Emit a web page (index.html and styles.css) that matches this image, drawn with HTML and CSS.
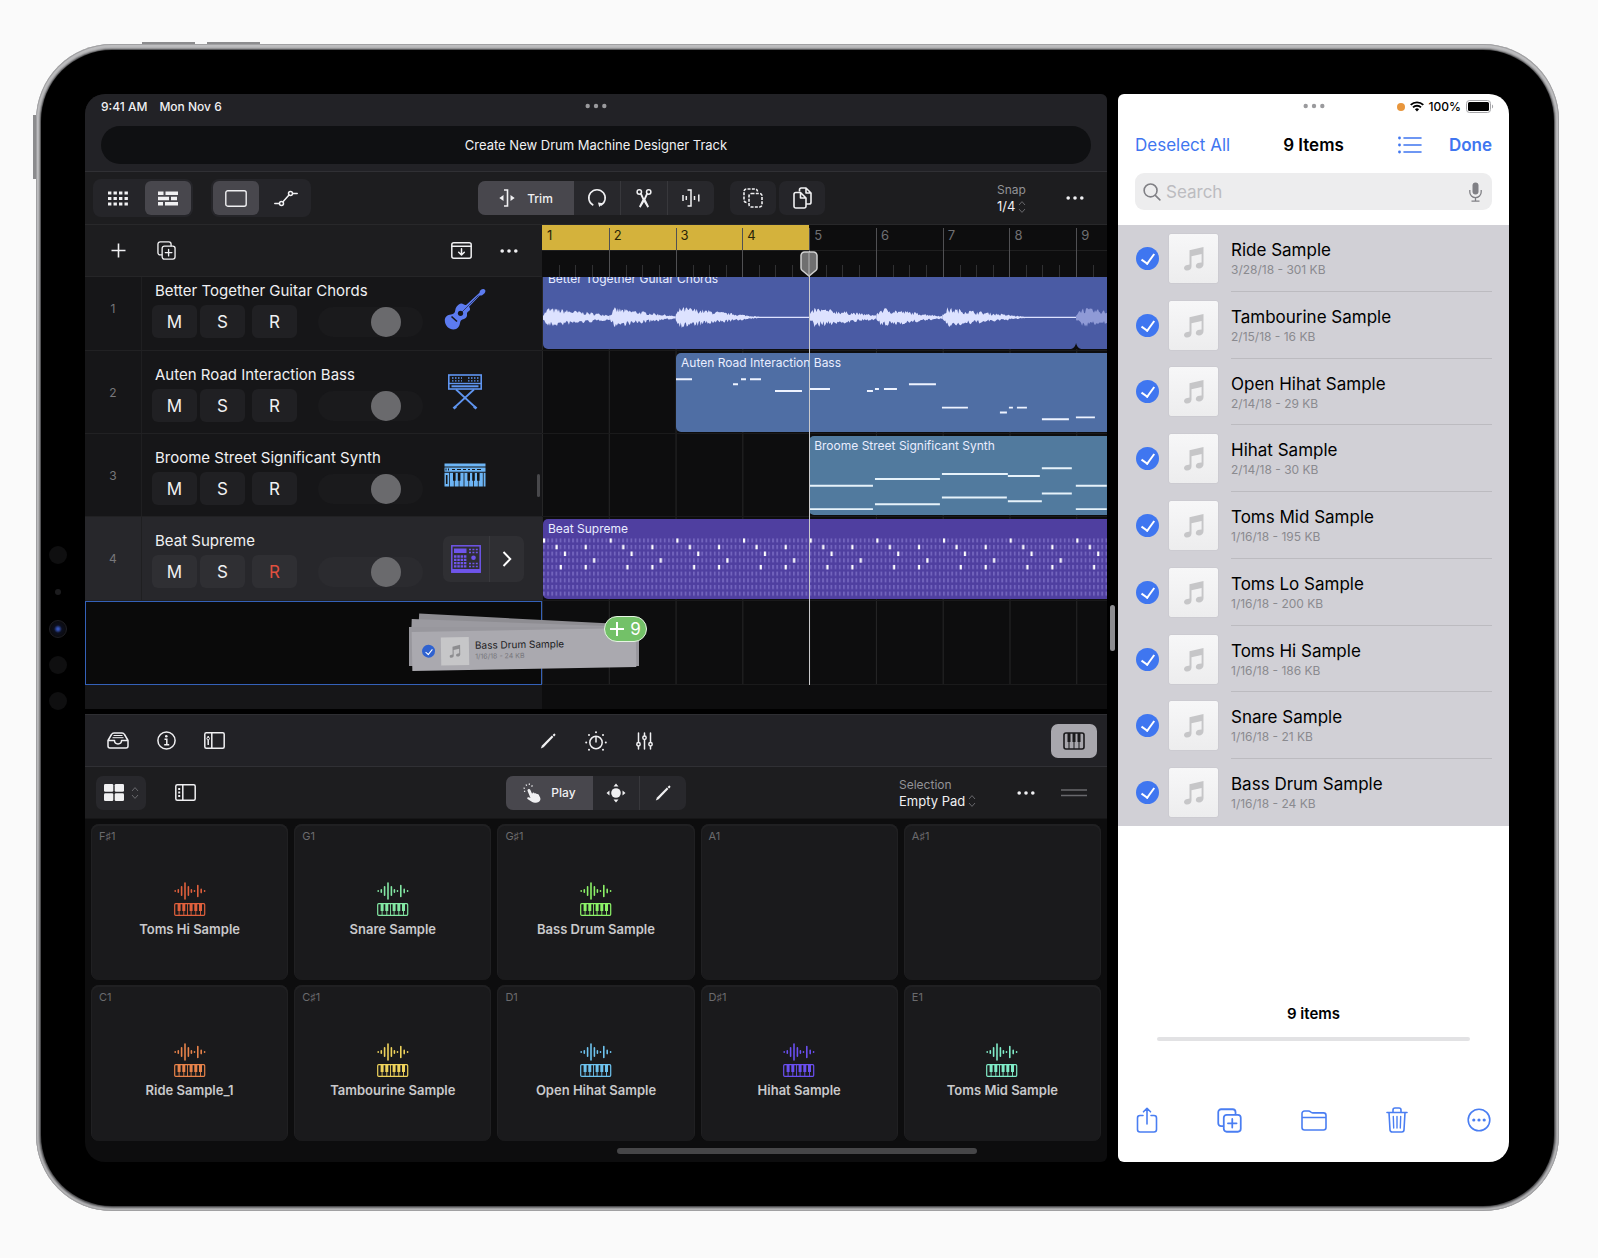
FILE: index.html
```html
<!DOCTYPE html>
<html lang="en">
<head>
<meta charset="utf-8">
<meta name="viewport" content="width=device-width, initial-scale=1">
<title>Drum Machine Designer</title>
<link rel="stylesheet" href="styles.css">
</head>
<body>
<svg class="symbols" aria-hidden="true">
  <symbol id="i-dots" viewBox="0 0 18 4"><circle cx="2.2" cy="2" r="1.8"/><circle cx="9" cy="2" r="1.8"/><circle cx="15.8" cy="2" r="1.8"/></symbol>
  <symbol id="i-updown" viewBox="0 0 8 14"><path d="M1 5l3-3.4L7 5M1 9l3 3.4L7 9" fill="none" stroke="currentColor"/></symbol>
  <symbol id="i-duplicate" viewBox="0 0 24 24"><g fill="none" stroke="currentColor" stroke-width="1.7" stroke-linecap="round" stroke-linejoin="round"><path d="M6 17.5H4A2.8 2.8 0 0 1 1.2 14.700V4A2.800 2.800 0 0 1 4 1.200H15A2.800 2.800 0 0 1 17.800 4V6"/><rect x="6.500" y="6.500" width="16.300" height="16.300" rx="2.800"/><path d="M14.650 10.500v8.300M10.500 14.650h8.300"/></g></symbol>
  <symbol id="i-pencil" viewBox="0 0 16 16"><path d="M.8 15.400l1.200-2.900L11.900 2.600l1.500 1.500L3.600 14.200z"/><path d="M12.600 1.900l1-1a1.060 1.060 0 0 1 1.500 1.500l-1 1z"/></symbol>
  <symbol id="i-note" viewBox="0 0 22 25"><path d="M6.500 4.200L20.500 1v17.200c0 2.600-2 4.300-4.500 4.300-2 0-3.200-1-3.200-2.500 0-1.800 1.500-2.900 3.600-3.200l2.200-.4V8L8.500 10.200v10.300c0 2.500-2 4.100-4.300 4.100C2.200 24.600 1 23.500 1 22c0-1.700 1.400-2.800 3.500-3.100l2-.4z"/></symbol>
  <symbol id="i-sample" viewBox="0 0 32 34"><g stroke="currentColor" stroke-width="1.600" stroke-linecap="round" fill="none"><path d="M1.200 8.800v.4M4.300 7.800v2.400M7.600 4.800v8.400M11 1v16M14.400 4.800v8.400M17.400 7.800v2.400M20.500 8.800v.4M23.800 3.600v10.800M27.200 7.400v3.200M30.600 8.800v.4"/></g><rect x=".7" y="21.700" width="30" height="11.600" rx="1" fill="none" stroke="currentColor" stroke-width="1.200"/><path d="M3.600 22h3v7h-3zM8.300 22h3v7h-3zM15.600 22h3v7h-3zM20.300 22h3v7h-3zM25 22h3v7h-3z"/><path d="M5.100 28v5M9.800 28v5M13.500 22v11M17.100 28v5M21.800 28v5M26.500 28v5" stroke="currentColor" stroke-width=".9"/></symbol>
</svg>

<div class="device">
  <i class="side-key side-key-a"></i><i class="side-key side-key-b"></i><i class="side-key side-key-c"></i>
  <div class="bezel">
    <div class="sensors"><i></i><i class="dot"></i><i class="lens"></i><i></i><i></i></div>
    <div class="screen">

      <main class="studio">
        <header class="studio-top">
          <div class="status"><span>9:41 AM</span><span>Mon Nov 6</span><svg class="multitask" width="22" height="6"><use href="#i-dots"/></svg></div>
          <div class="banner">Create New Drum Machine Designer Track</div>
        </header>

        <div class="toolbar">
          <div class="toolbar-left">
            <div class="group">
              <button aria-label="Grid"><svg width="20" height="15" viewBox="0 0 20 15"><path stroke="currentColor" stroke-width="3.200" stroke-dasharray="3.400 2.100" d="M0 2h20M0 7.500h20M0 13h20"/></svg></button>
              <button class="on" aria-label="Tracks"><svg width="20" height="15" viewBox="0 0 20 15"><path d="M0 .5h5.500v3.500H0zM7.500 .5H20v3.500H7.500zM0 5.800h11v3.500H0zM13 5.800h6v3.500h-6zM0 11h5v3.500H0zM7 11h13v3.500H7z"/></svg></button>
            </div>
            <div class="group">
              <button class="on" aria-label="Region"><svg width="22" height="17" viewBox="0 0 22 17"><rect x=".8" y=".8" width="20.400" height="15.400" rx="2" fill="none" stroke="currentColor" stroke-width="1.400"/></svg></button>
              <button aria-label="Automation"><svg width="24" height="17" viewBox="0 0 24 17"><g fill="none" stroke="currentColor" stroke-width="1.500" stroke-linecap="round"><path d="M.8 13.500h4.500M9 11.800L15 5M18.800 3.500h4.400"/><circle cx="7.500" cy="13.500" r="2"/><circle cx="16.500" cy="3.500" r="2"/></g></svg></button>
            </div>
          </div>
          <div class="segmented">
            <button class="on wide"><svg width="16" height="18" viewBox="0 0 16 18"><path d="M5 1h3.500v16H5" fill="none" stroke="currentColor" stroke-width="1.600"/><path d="M4.500 6v6L.3 9zM11.500 6v6l4.200-3z"/></svg>Trim</button>
            <button aria-label="Loop"><svg width="20" height="20" viewBox="0 0 20 20"><path d="M6.300 17.300A8.200 8.200 0 1 1 13.700 17.300" fill="none" stroke="currentColor" stroke-width="1.600"/><path d="M11 14.500l5 .8-3.800 3.600z"/></svg></button>
            <button aria-label="Split"><svg width="16" height="19" viewBox="0 0 16 19"><g fill="none" stroke="currentColor" stroke-width="1.500"><circle cx="3.300" cy="3" r="2.200"/><circle cx="12.700" cy="3" r="2.200"/></g><path d="M4 5l1.700-.8 2.300 5 2.300-5L12 5 9.500 10.500l3.500 7-1.500 1.200L8 13l-3.500 5.700L3 17.500l3.500-7z"/></svg></button>
            <button aria-label="Join"><svg width="18" height="18" viewBox="0 0 18 18"><g fill="none" stroke="currentColor" stroke-width="1.500"><path d="M5.500 1H9v16H5.500M1 6v6M4.300 7v4M12.500 7v4M16.800 5.500v7"/></g></svg></button>
          </div>
          <div class="tiles">
            <button aria-label="Select several"><svg width="20" height="20" viewBox="0 0 20 20"><g fill="none" stroke="currentColor" stroke-width="1.600"><rect x="6" y="5.500" width="13" height="13.500" rx="2.500" stroke-dasharray="3 1.300"/><path d="M3.500 14.500A2.500 2.500 0 0 1 1 12V3.500A2.500 2.500 0 0 1 3.500 1H12a2.500 2.500 0 0 1 2.500 2.500" stroke-dasharray="3 1.300"/></g></svg></button>
            <button aria-label="Copy"><svg width="19" height="22" viewBox="0 0 19 22"><g fill="none" stroke="currentColor" stroke-width="1.600" stroke-linejoin="round"><path d="M6.500 4.500V2.800A1.800 1.800 0 0 1 8.300 1H13l5 5v9.200A1.800 1.800 0 0 1 16.200 17H13M13 1v5h5"/><path d="M7.500 5.500L13 11v8.200a1.800 1.800 0 0 1-1.800 1.800H2.800A1.800 1.800 0 0 1 1 19.200V7.300a1.800 1.800 0 0 1 1.800-1.800zM7.500 5.500V11H13"/></g></svg></button>
          </div>
          <div class="toolbar-right">
            <div class="picker"><label for="snap">Snap</label><span><select id="snap"><option>1/4</option></select><svg width="8" height="14"><use href="#i-updown"/></svg></span></div>
            <button class="icon" aria-label="More"><svg width="18" height="4"><use href="#i-dots"/></svg></button>
          </div>
        </div>

        <section class="arrange">
          <div class="list-head">
            <button class="icon" aria-label="Add track"><svg width="15" height="15" viewBox="0 0 15 15"><path d="M7.500 .5v14M.5 7.500h14" stroke="currentColor" stroke-width="1.600"/></svg></button>
            <button class="icon" aria-label="Duplicate"><svg width="19" height="19"><use href="#i-duplicate"/></svg></button>
            <button class="icon push" aria-label="Import"><svg width="21" height="17" viewBox="0 0 21 17"><g fill="none" stroke="currentColor" stroke-width="1.500" stroke-linecap="round" stroke-linejoin="round"><rect x=".8" y=".8" width="19.400" height="15.400" rx="2"/><path d="M1 4.300h19M10.500 6.800v6M7.700 10.300l2.800 2.700 2.800-2.700"/></g></svg></button>
            <button class="icon" aria-label="More"><svg width="18" height="4"><use href="#i-dots"/></svg></button>
          </div>
          <div class="ruler">
            <span>1</span><span>2</span><span>3</span><span>4</span><span>5</span><span>6</span><span>7</span><span>8</span><span>9</span>
          </div>

          <div class="tracks">
            <div class="track first">
              <b>1</b>
              <div class="strip"><h2>Better Together Guitar Chords</h2><div class="controls"><button>M</button><button>S</button><button>R</button><input type="range" value="71" aria-label="Volume track 1"></div></div>
              <div class="instrument guitar"><svg width="42" height="42" viewBox="0 0 42 42"><path d="M35.500 4.800C35.500 2.500 38 .7 40 1.200s1.800 2.800 0 4.600-3.400 2-4.200 1.600L25 18.800c1.200 1.500 1.500 3 .3 4-1.500 1.300-2.600 1.500-2.300 3.700.3 2-1 4-3 4.500-2.500.6-3.700 1.500-4 4-.5 3.500-2.500 6.500-6.500 6.500C5 41.500.8 37.500.8 32.500c0-4 2.700-5.500 6.200-6 2.700-.4 4-1.500 4.300-4.500.2-2.500 2-4.200 3.500-5.500 1.500-1.200 3.200-1.300 4.700-.3 1.300.9 2 1.100 3.200.3z"/><circle cx="16.500" cy="25.300" r="2.600" fill="#161618"/><path d="M7.500 28.500l5.500 5" stroke="#161618" stroke-width="1.600"/><path d="M18 24L34.500 7.500" stroke="#161618" stroke-width=".6"/></svg></div>
            </div>
            <div class="track short">
              <b>2</b>
              <div class="strip"><h2>Auten Road Interaction Bass</h2><div class="controls"><button>M</button><button>S</button><button>R</button><input type="range" value="70" aria-label="Volume track 2"></div></div>
              <div class="instrument bass"><svg width="34" height="36" viewBox="0 0 34 36"><g fill="none" stroke="currentColor"><rect x=".8" y="1" width="32.400" height="14" stroke-width="1.600"/><path d="M1 9.500h32" stroke-width="1.400"/><path d="M3.500 12.300h27" stroke-width="2"/><path d="M4 4h10M20 4h11M4 6.800h10M20 6.800h11" stroke-width="1.300" stroke-dasharray="1.500 1.500"/><path d="M8 15.500L27 33M26 15.500L7 33" stroke-width="1.700"/><path d="M5.500 34.500l2.500-2M28.500 34.500l-2.500-2" stroke-width="2.800"/></g></svg></div>
            </div>
            <div class="track short">
              <b>3</b>
              <div class="strip"><h2>Broome Street Significant Synth</h2><div class="controls"><button>M</button><button>S</button><button>R</button><input type="range" value="70" aria-label="Volume track 3"></div></div>
              <div class="instrument synth"><svg width="42" height="24" viewBox="0 0 42 24"><path d="M.5.500h41v3H.5zM.5 4.500h41v4.200H.5z"/><path d="M8 6.500h3M13 6.500h4M19 6.500h3M24 6.500h2M28 6.500h3M33 6.500h4" stroke="#161618" stroke-width="1.200"/><path d="M2 5.500v2M4.500 5.500v2" stroke="#161618"/><path d="M.5 9.700h41v13.800H.5z"/><g stroke="#161618"><path d="M2.700 12v9" stroke-width="1.600"/><path d="M5.500 9.700V24M10.300 17v7M15.100 17v7M20 10v14M24.700 17v7M29.500 17v7M34.300 17v7M39.300 9.700V24" stroke-width=".8"/><path d="M10.300 9.700v8M15.100 9.700v8M24.700 9.700v8M29.500 9.700v8M34.300 9.700v8" stroke-width="2.600"/></g></svg></div>
              <i class="grabber"></i>
            </div>
            <div class="track selected">
              <b>4</b>
              <div class="strip"><h2>Beat Supreme</h2><div class="controls"><button>M</button><button>S</button><button class="armed">R</button><input type="range" value="71" aria-label="Volume track 4"></div></div>
              <div class="machine">
                <button aria-label="Drum machine"><svg width="30" height="28" viewBox="0 0 30 28"><rect x=".8" y=".8" width="28.400" height="26.400" fill="none" stroke="currentColor" stroke-width="1.500"/><path d="M3 3.500h12.500v4.500H3zM.8 24h28.400v3.500H.8z"/><path d="M3 11.500h12.500M3 14.800h12.500M3 18.100h12.500M3 21.300h12.500" stroke="currentColor" stroke-width="2.300" stroke-dasharray="2.500 .8"/><path d="M18 4.500h9M18 7.500h9M18 18.500h9M18 21.500h9" stroke="currentColor" stroke-width="1.300" stroke-dasharray="2 1.400"/><circle cx="22.500" cy="12.800" r="2.300"/></svg></button>
                <button aria-label="Open"><svg width="10" height="16" viewBox="0 0 10 16"><path d="M1.500 1l6.800 7-6.800 7" fill="none" stroke="#fff" stroke-width="1.900"/></svg></button>
              </div>
            </div>
            <div class="drop-slot"></div>
          </div>

          <div class="lanes">
            <div class="lane first"><div class="region audio"><span>Better Together Guitar Chords</span><svg id="waveform" viewBox="0 0 565 81" preserveAspectRatio="none"></svg></div></div>
            <div class="lane short"><div class="region midi-bass"><span>Auten Road Interaction Bass</span>
              <svg viewBox="0 0 431 81" preserveAspectRatio="none"><path stroke="#eef3ff" stroke-width="2" d="M0 27h16M57 32h5M65 27h5M74 27h11M99 39h27M134 37h20M191 39h6M199 37h4M208 37h13M233 32h27M266 56h26M324 61h7M333 56h4M341 56h10M366 68h27M400 66h19"/></svg></div></div>
            <div class="lane short"><div class="region midi-synth"><span>Broome Street Significant Synth</span>
              <svg viewBox="0 0 298 81" preserveAspectRatio="none"><path stroke="#e6f2fa" stroke-width="2" d="M0 51h64M66 44h65M133 39h66M199 41h32M233 33h30M267 51h31M0 75h64M66 70h65M133 63h65M199 67h34M233 59h30M267 75h31"/></svg></div></div>
            <div class="lane"><div class="region drums"><span>Beat Supreme</span>
              <svg viewBox="0 0 565 81" preserveAspectRatio="none">
                <defs>
                  <pattern id="steps" width="4.174" height="6.750" patternUnits="userSpaceOnUse" y="19.500"><rect width="1.800" height="4.200" fill="#7264bd"/></pattern>
                  <pattern id="hits" width="66.780" height="61" patternUnits="userSpaceOnUse" y="19.500"><g fill="#fff"><rect width="2.200" height="4.500"/><rect x="12.500" y="6.700" width="2.200" height="4.500"/><rect x="41.700" y="6.700" width="2.200" height="4.500"/><rect x="20.900" y="13.500" width="2.200" height="4.500"/><rect x="50.100" y="20.200" width="2.200" height="4.500"/><rect x="16.700" y="27" width="2.200" height="4.500"/><rect x="41.700" y="27" width="2.200" height="4.500"/></g></pattern>
                </defs>
                <rect y="19.500" width="565" height="59" fill="url(#steps)"/><rect y="19.500" width="565" height="59" fill="url(#hits)"/>
              </svg></div></div>
            <div class="lane"></div>
          </div>

          <div class="playhead"><svg width="18" height="26" viewBox="0 0 18 26"><path d="M4.500 1h9A3.500 3.500 0 0 1 17 4.500V17c0 1-.4 1.700-1 2.300L9 25l-7-5.700c-.6-.6-1-1.300-1-2.300V4.500A3.500 3.500 0 0 1 4.500 1z" fill="#6f6f70" stroke="#d0d0d0" stroke-width="1.500"/><path d="M9 2v23" stroke="#b4b4b4"/></svg></div>

          <div class="drag-stack">
            <i class="sheet sheet-c"></i><i class="sheet sheet-b"></i><i class="sheet sheet-a"></i>
            <div class="sheet front">
              <i class="tick"></i><span class="mini"><svg width="12" height="14"><use href="#i-note"/></svg></span>
              <div><strong>Bass Drum Sample</strong><small>1/16/18 - 24 KB</small></div>
            </div>
            <span class="count"><svg width="14" height="14" viewBox="0 0 14 14"><path d="M7 0v14M0 7h14" stroke="#fff" stroke-width="2"/></svg>9</span>
          </div>
        </section>

        <nav class="bar">
          <div>
            <button class="icon" aria-label="Browser"><svg width="22" height="17" viewBox="0 0 22 17"><g fill="none" stroke="currentColor" stroke-width="1.500" stroke-linejoin="round"><path d="M1 8.500L4.500 2.500Q5.300 1 7 1h8q1.700 0 2.500 1.500L21 8.500V14a2 2 0 0 1-2 2H3a2 2 0 0 1-2-2zM1 8.500h6.500c0 4.500 7 4.500 7 0H21"/><path d="M6.500 3.500h9M5.500 5.700h11" stroke-width="1"/></g></svg></button>
            <button class="icon" aria-label="Inspector"><svg width="19" height="19" viewBox="0 0 19 19"><circle cx="9.500" cy="9.500" r="8.600" fill="none" stroke="currentColor" stroke-width="1.500"/><circle cx="9.300" cy="5.200" r="1.300"/><path d="M7.500 8.300h2.300v5.400M7.200 13.800h5" fill="none" stroke="currentColor" stroke-width="1.500"/></svg></button>
            <button class="icon" aria-label="Channel strip"><svg width="21" height="17" viewBox="0 0 21 17"><g fill="none" stroke="currentColor" stroke-width="1.500"><rect x=".8" y=".8" width="19.400" height="15.400" rx="1.500"/><path d="M7.800 1v15M4.200 4v1.500M4.200 8v5"/><circle cx="4.200" cy="6.500" r="1.300" stroke-width="1"/></g></svg></button>
          </div>
          <div>
            <button class="icon" aria-label="Editor"><svg width="16" height="16"><use href="#i-pencil"/></svg></button>
            <button class="icon" aria-label="Plug-ins"><svg width="22" height="20" viewBox="0 0 22 20"><circle cx="11" cy="11.500" r="6.200" fill="none" stroke="currentColor" stroke-width="1.500"/><path d="M11 5.500v6" stroke="currentColor" stroke-width="1.500"/><circle cx="11" cy="1.300" r="1"/><circle cx="4" cy="4" r="1"/><circle cx="18" cy="4" r="1"/><circle cx="1.200" cy="11.500" r="1"/><circle cx="20.800" cy="11.500" r="1"/><circle cx="4" cy="18.700" r="1"/><circle cx="18" cy="18.700" r="1"/></svg></button>
            <button class="icon" aria-label="Mixer"><svg width="17" height="18" viewBox="0 0 17 18"><g fill="none" stroke="currentColor" stroke-width="1.500" stroke-linecap="round"><path d="M2.500 1v9M2.500 14.500V17M8.500 1v2.500M8.500 8v9M14.500 1v9M14.500 14.500V17"/><circle cx="2.500" cy="12.200" r="1.700"/><circle cx="8.500" cy="5.700" r="1.700"/><circle cx="14.500" cy="12.200" r="1.700"/></g></svg></button>
          </div>
          <div class="end">
            <button class="keys" aria-label="Play surface"><svg width="22" height="18" viewBox="0 0 22 18"><rect x="1" y="1" width="20" height="16" rx="2" fill="none" stroke="currentColor" stroke-width="1.600"/><path d="M4.500 1h3v9h-3zM9.500 1h3v9h-3zM14.500 1h3v9h-3z"/><path d="M6 9v8M11 9v8M16 9v8" stroke="currentColor" stroke-width="1"/></svg></button>
          </div>
        </nav>

        <nav class="bar surface-bar">
          <div>
            <button class="layout" aria-label="Pad layout"><svg width="20" height="17" viewBox="0 0 20 17"><rect width="9.300" height="7.800" rx="1.300"/><rect x="10.700" width="9.300" height="7.800" rx="1.300"/><rect y="9.200" width="9.300" height="7.800" rx="1.300"/><rect x="10.700" y="9.200" width="9.300" height="7.800" rx="1.300"/></svg><svg class="dim" width="8" height="14"><use href="#i-updown"/></svg></button>
            <button class="icon wide-icon" aria-label="Pad controls"><svg width="21" height="17" viewBox="0 0 21 17"><g fill="none" stroke="currentColor" stroke-width="1.500"><rect x=".8" y=".8" width="19.400" height="15.400" rx="1.500"/><path d="M7.800 1v15"/><path d="M4.200 4v9.500" stroke-width="2" stroke-dasharray="2 1.500"/></g></svg></button>
          </div>
          <div class="segmented">
            <button class="on play"><svg width="18" height="20" viewBox="0 0 18 20"><path d="M5.200 6.200c1-.5 1.800 0 2.200.9l1.700 3.700.5-.8c.7-.7 1.700-.4 2 .5.7-.6 1.800-.4 2.100.6.8-.5 1.800-.1 2.200.8l1.300 2.900c.6 1.700 0 3.200-1.300 4-1.700 1-5 1.400-6.700.3L4.500 16c-.8-.8.2-2 1.300-1.700l1.700.6L4.600 8c-.3-.7-.1-1.500.6-1.800z"/><path d="M1 8.500l1.200-.4M.5 5l1.300.3M3 1.500l.7 1.200M6.500.500l-.3 1.400M9.500 2.500l-1 1" stroke="currentColor" stroke-width="1.200"/></svg>Play</button>
            <button aria-label="Move"><svg width="20" height="20" viewBox="0 0 20 20"><circle cx="10" cy="10" r="4.800"/><path d="M7.500 3.500L10 .5l2.500 3zM7.500 16.500l2.500 3 2.500-3zM3.500 7.500l-3 2.500 3 2.500zM16.500 7.500l3 2.500-3 2.500z"/></svg></button>
            <button aria-label="Edit"><svg width="16" height="16"><use href="#i-pencil"/></svg></button>
          </div>
          <div class="end">
            <div class="picker"><label for="selection">Selection</label><span><select id="selection"><option>Empty Pad</option></select><svg width="8" height="14"><use href="#i-updown"/></svg></span></div>
            <button class="icon" aria-label="More"><svg width="18" height="4"><use href="#i-dots"/></svg></button>
            <button class="icon dim" aria-label="Resize"><svg width="26" height="8" viewBox="0 0 26 8"><path d="M0 1h26M0 6.500h26" stroke="currentColor" stroke-width="1.300"/></svg></button>
          </div>
        </nav>

        <section class="pads">
          <button class="pad red"><span>F♯1</span><svg width="32" height="34"><use href="#i-sample"/></svg>Toms Hi Sample</button>
          <button class="pad mint"><span>G1</span><svg width="32" height="34"><use href="#i-sample"/></svg>Snare Sample</button>
          <button class="pad green"><span>G♯1</span><svg width="32" height="34"><use href="#i-sample"/></svg>Bass Drum Sample</button>
          <button class="pad"><span>A1</span></button>
          <button class="pad"><span>A♯1</span></button>
          <button class="pad orange"><span>C1</span><svg width="32" height="34"><use href="#i-sample"/></svg>Ride Sample_1</button>
          <button class="pad yellow"><span>C♯1</span><svg width="32" height="34"><use href="#i-sample"/></svg>Tambourine Sample</button>
          <button class="pad sky"><span>D1</span><svg width="32" height="34"><use href="#i-sample"/></svg>Open Hihat Sample</button>
          <button class="pad violet"><span>D♯1</span><svg width="32" height="34"><use href="#i-sample"/></svg>Hihat Sample</button>
          <button class="pad aqua"><span>E1</span><svg width="32" height="34"><use href="#i-sample"/></svg>Toms Mid Sample</button>
        </section>
      </main>

      <div class="split"><i></i></div>

      <aside class="files">
        <div class="files-status">
          <svg class="multitask" width="22" height="6"><use href="#i-dots"/></svg>
          <i class="mic-on"></i>
          <svg width="14" height="11" viewBox="0 0 14 11"><g fill="none" stroke="#000" stroke-width="1.900"><path d="M.7 3.900a9 9 0 0 1 12.600 0M3 6.400a5.700 5.700 0 0 1 8 0"/></g><path d="M4.900 8.300a3 3 0 0 1 4.200 0L7 10.600z"/></svg>
          <span>100%</span>
          <svg width="28" height="13" viewBox="0 0 28 13"><rect x=".5" y=".5" width="24" height="12" rx="3" fill="none" stroke="#a5a5a8"/><rect x="2" y="2" width="21" height="9" rx="1.500"/><path d="M26 4.500c1.500.5 1.500 3.500 0 4z" fill="#a5a5a8"/></svg>
        </div>
        <div class="files-nav">
          <button>Deselect All</button>
          <h1>9 Items</h1>
          <div><button aria-label="List view"><svg width="24" height="18" viewBox="0 0 24 18"><path d="M6 2h17M6 9h17M6 16h17" stroke="currentColor" stroke-width="1.600" stroke-linecap="round"/><circle cx="1.500" cy="2" r="1.400"/><circle cx="1.500" cy="9" r="1.400"/><circle cx="1.500" cy="16" r="1.400"/></svg></button><button class="done">Done</button></div>
        </div>
        <div class="search">
          <svg width="18" height="18" viewBox="0 0 19 19"><g fill="none" stroke="currentColor" stroke-width="1.700" stroke-linecap="round"><circle cx="8" cy="7.800" r="6.800"/><path d="M13 13l4.800 4.800"/></g></svg>
          <input type="search" placeholder="Search" aria-label="Search">
          <svg width="13" height="20" viewBox="0 0 13 20"><rect x="3.500" y=".5" width="6" height="12" rx="3"/><path d="M.8 8v2a5.700 5.700 0 0 0 11.400 0V8M6.500 16v3M2.500 19.200h8" fill="none" stroke="currentColor" stroke-width="1.300"/></svg>
        </div>
        <ul class="file-list">
          <li><label><input type="checkbox" checked><span class="thumb"><svg width="22" height="25"><use href="#i-note"/></svg></span><span class="meta">Ride Sample<small>3/28/18 - 301 KB</small></span></label></li>
          <li><label><input type="checkbox" checked><span class="thumb"><svg width="22" height="25"><use href="#i-note"/></svg></span><span class="meta">Tambourine Sample<small>2/15/18 - 16 KB</small></span></label></li>
          <li><label><input type="checkbox" checked><span class="thumb"><svg width="22" height="25"><use href="#i-note"/></svg></span><span class="meta">Open Hihat Sample<small>2/14/18 - 29 KB</small></span></label></li>
          <li><label><input type="checkbox" checked><span class="thumb"><svg width="22" height="25"><use href="#i-note"/></svg></span><span class="meta">Hihat Sample<small>2/14/18 - 30 KB</small></span></label></li>
          <li><label><input type="checkbox" checked><span class="thumb"><svg width="22" height="25"><use href="#i-note"/></svg></span><span class="meta">Toms Mid Sample<small>1/16/18 - 195 KB</small></span></label></li>
          <li><label><input type="checkbox" checked><span class="thumb"><svg width="22" height="25"><use href="#i-note"/></svg></span><span class="meta">Toms Lo Sample<small>1/16/18 - 200 KB</small></span></label></li>
          <li><label><input type="checkbox" checked><span class="thumb"><svg width="22" height="25"><use href="#i-note"/></svg></span><span class="meta">Toms Hi Sample<small>1/16/18 - 186 KB</small></span></label></li>
          <li><label><input type="checkbox" checked><span class="thumb"><svg width="22" height="25"><use href="#i-note"/></svg></span><span class="meta">Snare Sample<small>1/16/18 - 21 KB</small></span></label></li>
          <li><label><input type="checkbox" checked><span class="thumb"><svg width="22" height="25"><use href="#i-note"/></svg></span><span class="meta">Bass Drum Sample<small>1/16/18 - 24 KB</small></span></label></li>
        </ul>
        <p class="total">9 items</p>
        <div class="storage"></div>
        <div class="actions">
          <button aria-label="Share"><svg width="22" height="26" viewBox="0 0 22 26"><g fill="none" stroke="currentColor" stroke-width="1.600" stroke-linecap="round" stroke-linejoin="round"><path d="M7 8.500H4A2.500 2.500 0 0 0 1.500 11v11.500A2.500 2.500 0 0 0 4 25h14a2.500 2.500 0 0 0 2.500-2.500V11A2.500 2.500 0 0 0 18 8.500h-3M11 17V1.500M7.500 4.800L11 1.300l3.500 3.500"/></g></svg></button>
          <button aria-label="Duplicate"><svg width="25" height="25"><use href="#i-duplicate"/></svg></button>
          <button aria-label="Move"><svg width="26" height="21" viewBox="0 0 26 21"><path d="M1 17.500v-14A2.500 2.500 0 0 1 3.500 1h4c1 0 1.500.3 2.200 1 .6.600 1 .9 2 .9h10.800A2.500 2.500 0 0 1 25 5.400v12.100a2.500 2.500 0 0 1-2.500 2.500h-19A2.500 2.500 0 0 1 1 17.500zM1 7.500h24" fill="none" stroke="currentColor" stroke-width="1.600"/></svg></button>
          <button aria-label="Delete"><svg width="22" height="26" viewBox="0 0 22 26"><g fill="none" stroke="currentColor" stroke-width="1.600" stroke-linecap="round" stroke-linejoin="round"><path d="M1 5.500h20M7 5.500V3a2 2 0 0 1 2-2h4a2 2 0 0 1 2 2v2.500M3 5.500l1 17.300A2.200 2.200 0 0 0 6.200 25h9.600a2.200 2.200 0 0 0 2.200-2.200l1-17.300"/><path d="M7.300 9.500l.4 11.500M11 9.500V21M14.700 9.500L14.300 21" stroke-width="1.400"/></g></svg></button>
          <button aria-label="More"><svg width="24" height="24" viewBox="0 0 24 24"><circle cx="12" cy="12" r="10.800" fill="none" stroke="currentColor" stroke-width="1.600"/><circle cx="6.800" cy="12" r="1.600"/><circle cx="12" cy="12" r="1.600"/><circle cx="17.200" cy="12" r="1.600"/></svg></button>
        </div>
      </aside>
      <i class="home"></i>
    </div>
  </div>
</div>
<script src="app.js"></script>
</body>
</html>
```
FILE: styles.css
```css
* { box-sizing: border-box; }
body {
  margin: 0;
  padding: 44px 39px 47px 36px;
  background: #fafafa;
  color: #f0f0f2;
  font-family: Inter, "Liberation Sans", sans-serif;
  font-size: 13px;
}
button, input, select { font: inherit; color: inherit; }
button {
  display: flex;
  align-items: center;
  justify-content: center;
  padding: 0;
  border: 0;
  background: none;
}
h1, h2, p, ul { margin: 0; padding: 0; }
svg { display: block; flex: none; fill: currentColor; }
.symbols { display: none; }

/* Device shell */
.device {
  position: relative;
  padding: 6px 5px 5px;
  border-radius: 76px;
  background: linear-gradient(#b4b4b6, #9c9c9e 50%, #737376);
  box-shadow: inset 0 0 0 1px #a0a0a2, inset 0 0 3px 3px #c0c0c2;
}
.side-key { position: absolute; background: #8c8c8e; }
.side-key-a { left: 106px; top: -2px; width: 53px; height: 2px; }
.side-key-b { left: 171px; top: -2px; width: 53px; height: 2px; }
.side-key-c { left: -3px; top: 71px; width: 3px; height: 64px; }
.bezel {
  position: relative;
  padding: 44px 45px 44px 44px;
  border-radius: 71px;
  background: #000;
  box-shadow: 0 0 2px 1px #3a3a3c;
}
.sensors {
  position: absolute;
  left: 8px;
  top: 496px;
  display: flex;
  flex-direction: column;
  align-items: center;
  gap: 18px;
}
.sensors i { width: 18px; height: 18px; border-radius: 50%; background: #0f0f10; }
.sensors .dot { width: 6px; height: 6px; margin: 7px 0; background: #1c1c1e; }
.sensors .lens { border: 1px solid #1e1e24; background: radial-gradient(#3553b8 0 1px, #0c0f1e 4px, #0b0b0e 8px); }
.screen { position: relative; display: flex; border-radius: 20px; overflow: hidden; }
.home {
  position: absolute;
  left: 50%;
  bottom: 8px;
  width: 360px;
  height: 6px;
  margin-left: -180px;
  border-radius: 3px;
  background: #464648;
}

/* Studio app */
.studio { flex: 1; min-width: 0; background: #0d0d0e; border-radius: 0 6px 6px 0; overflow: hidden; }
.studio-top { padding: 0 16px 7px; background: #222226; border-bottom: 1px solid #303034; }
.status {
  position: relative;
  display: flex;
  align-items: center;
  gap: 12px;
  height: 25px;
  margin-bottom: 7px;
  font-size: 12px;
  font-weight: 500;
}
.multitask { position: absolute; left: 50%; top: 9px; margin-left: -11px; color: #9a9a9d; }
.banner {
  height: 38px;
  border-radius: 19px;
  background: #0f1012;
  line-height: 38px;
  text-align: center;
  font-size: 13px;
}
.toolbar {
  display: flex;
  align-items: center;
  height: 53px;
  padding: 0 8px;
  background: #1d1d1f;
  border-bottom: 1px solid #28282a;
}
.toolbar-left { display: flex; gap: 18px; width: 385px; }
.group { display: flex; gap: 4px; padding: 2px; border-radius: 8px; background: #252529; }
.group button { width: 46px; height: 34px; border-radius: 6px; }
.group .on { background: #48474d; }
.segmented { display: flex; height: 34px; border-radius: 7px; background: #28282c; overflow: hidden; font-size: 12px; font-weight: 500; }
.segmented button { width: 47px; height: 34px; border-left: 1px solid #38383c; }
.segmented .on { gap: 12px; border-left: 0; background: #48474d; }
.segmented .on + button { width: 46px; border-left: 0; }
.segmented .wide { width: 96px; }
.segmented .play { width: 87px; gap: 10px; }
.tiles { display: flex; gap: 3px; margin-left: 16px; }
.tiles button { width: 46px; height: 34px; border-radius: 7px; background: #252529; }
.toolbar-right { display: flex; align-items: center; gap: 25px; margin-left: auto; }
.picker { display: flex; flex-direction: column; }
.picker label { color: #929296; font-size: 12px; line-height: 17px; }
.picker span { display: flex; align-items: center; gap: 2px; height: 17px; color: #68686c; }
.picker select { appearance: none; margin: 0; padding: 0; border: 0; background: none; color: #f0f0f2; font-size: 13px; line-height: 17px; }
.icon { width: 48px; height: 34px; }
.push { margin-left: auto; }
.dim { color: #68686c; }

/* Arrange area */
.arrange { position: relative; display: grid; grid-template-columns: 457px minmax(0, 1fr); border-bottom: 5px solid #000; }
.list-head { display: flex; align-items: center; height: 52px; padding: 0 9px; background: #1d1d1f; border-bottom: 1px solid #252527; }
.ruler {
  display: grid;
  grid-template-columns: repeat(8, minmax(0, 100fr)) minmax(0, 46fr);
  background: linear-gradient(#d4b23c, #d4b23c) 0 0 / 47.300% 25px no-repeat, linear-gradient(#1f1f20, #1f1f20) 0 25px / 100% 1px no-repeat #0d0d0e;
}
.ruler span {
  padding: 0 0 0 5px;
  color: #707073;
  font-size: 13px;
  line-height: 20px;
  background:
    linear-gradient(#505053, #505053) 0 3px / 1px 49px no-repeat,
    linear-gradient(#303032, #303032) 17px 40px / 1px 12px no-repeat,
    linear-gradient(#303032, #303032) 33px 40px / 1px 12px no-repeat,
    linear-gradient(#303032, #303032) 50px 40px / 1px 12px no-repeat;
}
.ruler span:nth-child(-n+4) { color: #2a2408; }
.ruler span:first-child { background-size: 0 0, 1px 12px, 1px 12px, 1px 12px; }
.ruler span:last-child { overflow: hidden; }
.tracks { height: 432px; overflow: hidden; background: #161618; }
.track {
  position: relative;
  display: grid;
  grid-template-columns: 57px 292px 1fr;
  height: 84px;
  border-bottom: 1px solid #212123;
}
.track.short, .lane.short { height: 83px; }
.track.first, .lane.first { margin-top: -10px; }
.track b { display: grid; place-items: center; border-right: 1px solid #1f1f21; color: #77777a; font-size: 12px; font-weight: 400; }
.strip { padding: 13px 0 0 10px; }
.strip h2 { padding-left: 3px; font-size: 15px; line-height: 22px; font-weight: 400; white-space: nowrap; }
.controls { display: flex; align-items: center; gap: 3px; margin-top: 3px; }
.controls button { width: 45px; height: 33px; border-radius: 6px; background: #202023; font-size: 17px; }
.controls button:nth-child(3) { margin-left: 4px; }
.controls input {
  appearance: none;
  width: 105px;
  height: 30px;
  margin: 0 0 0 18px;
  border-radius: 15px;
  background: #1a1a1c;
}
.controls input::-webkit-slider-thumb { appearance: none; width: 30px; height: 30px; border-radius: 50%; background: #6a6a6d; }
.instrument { display: flex; align-items: center; width: 62px; justify-content: center; }
.guitar { color: #5c7bf0; }
.bass { color: #5f95f0; }
.synth { color: #6db5f5; }
.grabber { position: absolute; right: 2px; top: 40px; width: 3px; height: 23px; border-radius: 2px; background: #48484b; }
.selected { background: #27272b; }
.selected .controls button { background: #2f2f33; }
.selected .controls input { background: #2b2b2f; }
.selected .controls .armed { color: #e0503f; }
.machine { display: flex; align-self: center; margin-left: 9px; }
.machine button { width: 46px; height: 46px; border-radius: 7px 0 0 7px; background: #2f2f33; color: #6f55ea; }
.machine button + button { width: 35px; border-left: 1px solid #3a3a3e; border-radius: 0 7px 7px 0; }
.drop-slot { height: 84px; border: 1px solid #3461b8; background: #0a0a0a; }

.lanes {
  overflow: hidden;
  background: linear-gradient(90deg, #262627 1px, transparent 1px) 0 0 / calc(100% / 8.460) 408px repeat-x #0d0d0e;
}
.lane { display: flex; height: 84px; padding: 2px 0 1px 1px; border-bottom: 1px solid #1a1a1b; }
.region { position: relative; flex: 1; border-radius: 5px 0 0 5px; overflow: hidden; }
.region span { position: relative; display: block; padding: 0 5px; color: #e9edff; font-size: 12px; line-height: 19px; }
.region svg { position: absolute; inset: 0; width: 100%; height: 100%; }
.audio { background: #4a5ba4; }
.midi-bass { margin-left: 23.600%; background: #4f6ea4; }
.midi-synth { margin-left: 47.200%; background: #517a9e; }
.drums { background: #4f3fa0; }

.playhead { position: absolute; left: calc(457px + (100% - 457px) * 0.472); top: 26px; width: 1px; height: 434px; background: #c9c9cb; }
.playhead svg { position: absolute; left: -9px; top: 0; }

/* Dragged files */
.drag-stack { position: absolute; left: 327px; top: 401px; width: 224px; height: 45px; }
.sheet { position: absolute; left: 0; top: 4px; width: 224px; height: 39px; background: #aaa9af; }
.sheet-c { left: 6px; top: -7px; width: 212px; background: #8e8d92; transform: rotate(3deg); }
.sheet-b { left: -1px; top: -3px; background: #9b9aa0; transform: rotate(2deg); }
.sheet-a { left: -3px; top: 1px; width: 230px; background: #98979d; }
.front { display: flex; align-items: center; gap: 6px; padding-left: 10px; top: 4px; color: #1c1c1e; transform: rotate(-1deg); }
.tick { width: 13px; height: 13px; border-radius: 50%; background: #2f62d0; display: grid; place-items: center; }
.tick::before { content: ""; width: 3px; height: 6px; border: solid #fff; border-width: 0 1px 1px 0; transform: rotate(40deg); }
.mini { display: grid; place-items: center; width: 28px; height: 28px; background: #c6c6c8; color: #8d8d90; }
.front strong, .front small { display: block; font-weight: 400; font-size: 10px; line-height: 12px; }
.front small { color: #77777c; font-size: 7px; }
.count {
  position: absolute;
  left: 192px;
  top: -10px;
  display: flex;
  align-items: center;
  justify-content: center;
  gap: 6px;
  width: 43px;
  height: 26px;
  border: 1px solid #e6f5e3;
  border-radius: 13px;
  background: #73c168;
  color: #fff;
  font-size: 17px;
}

/* Lower bars */
.bar { display: grid; grid-template-columns: 1fr auto 1fr; align-items: center; height: 53px; padding: 0 9px; background: #222226; border-top: 1px solid #2e2e32; border-bottom: 1px solid #303034; }
.bar > div { display: flex; align-items: center; }
.bar .end { justify-content: flex-end; }
.keys { width: 46px; height: 34px; margin-right: 1px; border-radius: 7px; background: #a8a7ad; color: #1a1a1c; }
.surface-bar { height: 52px; background: #1d1d1f; border-top: 0; border-bottom-color: #161617; }
.layout { gap: 7px; width: 50px; height: 34px; margin-left: 2px; border-radius: 7px; background: #28282c; }
.wide-icon { margin-left: 15px; }
.surface-bar .picker { margin-right: 26px; }

/* Pads */
.pads { display: grid; grid-template-columns: repeat(5, 1fr); grid-auto-rows: 156px; gap: 5px 6px; padding: 5px 6px 21px; }
.pad {
  position: relative;
  flex-direction: column;
  gap: 4px;
  padding-top: 16px;
  border-radius: 8px;
  background: #1a1a1c;
  box-shadow: inset 0 1px 0 1px #202022;
  color: #c9c9cb;
  font-weight: 600;
  line-height: 18px;
}
.pad span { position: absolute; left: 8px; top: 4px; color: #6b6b6e; font-size: 11px; line-height: 16px; font-weight: 400; }
.red svg { color: #e0603c; }
.mint svg { color: #84e8a4; }
.green svg { color: #8cf268; }
.orange svg { color: #e8834a; }
.yellow svg { color: #efd35c; }
.sky svg { color: #6ec3ef; }
.violet svg { color: #6a4ff0; }
.aqua svg { color: #80ecc8; }

/* Split view divider */
.split { display: grid; place-items: center; width: 11px; background: #000; }
.split i { width: 5px; height: 46px; border-radius: 3px; background: #8c8c90; }

/* Files app */
.files { display: flex; flex-direction: column; width: 391px; border-radius: 6px 0 0 6px; background: #fff; color: #000; overflow: hidden; }
.files-status { position: relative; display: flex; align-items: center; justify-content: flex-end; gap: 5px; height: 25px; margin-bottom: 1px; padding-right: 15px; font-size: 12px; font-weight: 500; }
.mic-on { width: 8px; height: 8px; border-radius: 50%; background: #e8963c; }
.files-nav { display: grid; grid-template-columns: 1fr auto 1fr; align-items: center; height: 50px; padding: 0 17px; color: #3f76f0; font-size: 17px; }
.files-nav > button { justify-self: start; }
.files-nav h1 { color: #000; font-size: 17px; font-weight: 600; }
.files-nav div { display: flex; justify-content: flex-end; gap: 27px; }
.files-nav .done { font-weight: 600; }
.search { display: flex; align-items: center; gap: 5px; height: 37px; margin: 3px 17px 15px; padding: 0 10px 0 8px; border-radius: 9px; background: #ededee; color: #808085; }
.search input { flex: 1; min-width: 0; padding: 0; border: 0; outline: 0; background: none; font-size: 17px; }
.search input::placeholder { color: #bcbcc0; }
.file-list { display: grid; grid-auto-rows: 1fr; min-height: 601px; list-style: none; background: #d1d0d6; }
.file-list label { display: grid; grid-template-columns: 23px 49px 1fr; align-items: center; height: 100%; padding: 0 17px 0 18px; column-gap: 10px; }
.file-list input { appearance: none; display: grid; place-items: center; width: 23px; height: 23px; margin: 0; border-radius: 50%; background: #3f76f0; }
.file-list input::before { content: ""; width: 6px; height: 11px; margin-bottom: 2px; border: solid #fff; border-width: 0 2px 2px 0; transform: rotate(36deg); }
.thumb { display: grid; place-items: center; width: 49px; height: 49px; border-radius: 2px; background: linear-gradient(#f7f7f8, #ededee); color: #c6c6c8; box-shadow: 0 0 1px #a0a0a4; }
.meta { align-self: stretch; margin-left: 3px; padding-top: 14px; border-bottom: 1px solid #bcbbc0; font-size: 17px; line-height: 22px; }
.file-list li:last-child .meta { border-bottom: 0; }
.meta small { display: block; color: #8a8a8f; font-size: 12px; line-height: 18px; }
.total { margin-top: auto; text-align: center; font-size: 15px; line-height: 20px; font-weight: 600; }
.storage { height: 4px; margin: 13px 39px 37px; border-radius: 2px; background: #e2e2e4; }
.actions { display: flex; justify-content: space-between; align-items: center; height: 84px; padding: 0 18px; color: #4a7ef2; }
```
FILE: app.js
```js
// Draws the audio region's waveform: each burst is [start, end, peak, tail].
(function () {
  var svg = document.getElementById("waveform");
  var mid = 49;
  var bursts = [[0, 67, 11, 3], [67, 133, 11, 1.5], [133, 267, 12, 0], [267, 334, 11, 2.5], [334, 400, 11, 1.5], [400, 534, 11, 0], [534, 601, 11, 3]];
  var seed = 7;
  function noise() {
    seed = (seed * 16807) % 2147483647;
    return seed / 2147483647;
  }
  function level(burst, x) {
    var t = (x - burst[0]) / (burst[1] - burst[0]);
    var attack = Math.min(1, (x - burst[0] + 2) / 7);
    var fade = burst[3] ? 1 - t : Math.max(0, 1 - t * 1.5);
    return Math.max(0.7, attack * (burst[3] + (burst[2] - burst[3]) * fade) * (0.4 + 0.6 * noise()));
  }
  bursts.forEach(function (burst) {
    var top = "", bottom = "";
    for (var x = burst[0]; x <= Math.min(burst[1], 565); x += 1) {
      top += " " + x + "," + (mid - level(burst, x)).toFixed(1);
      bottom = x + "," + (mid + level(burst, x)).toFixed(1) + " " + bottom;
    }
    var shape = document.createElementNS("http://www.w3.org/2000/svg", "polygon");
    shape.setAttribute("points", top + " " + bottom);
    shape.setAttribute("fill", burst[0] === 534 ? "#8f9ad6" : "#dde2ff");
    svg.appendChild(shape);
  });
  var notch = document.createElementNS("http://www.w3.org/2000/svg", "path");
  notch.setAttribute("d", "M529 81q4-1 5-6 1 5 5 6z");
  notch.setAttribute("fill", "#0d0d0e");
  svg.appendChild(notch);
})();
```
